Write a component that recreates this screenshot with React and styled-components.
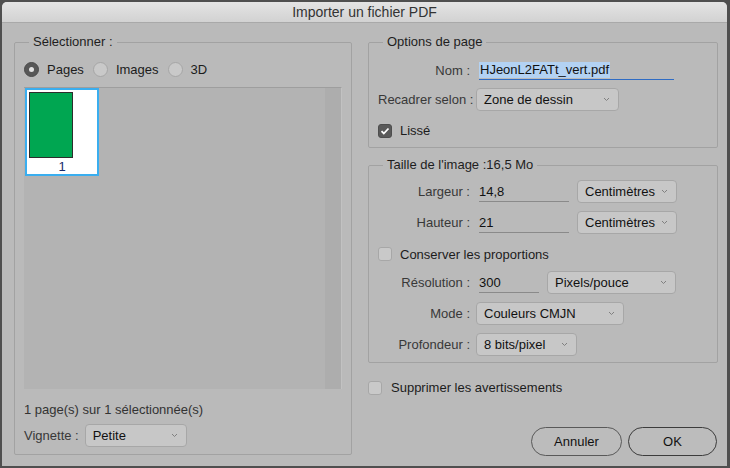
import React from 'react';
import styled, { createGlobalStyle } from 'styled-components';

const GlobalStyle = createGlobalStyle`
  html, body {
    margin: 0;
    padding: 0;
    background: #4f4f4f;
  }
  body {
    font-family: 'Liberation Sans', Arial, sans-serif;
    font-size: 13px;
    color: #1c1c1c;
  }
`;

const Window = styled.div`
  margin: 2px 3px 2px 2px;
  width: 725px;
  height: 464px;
  background: #bababa;
  border-radius: 5px 5px 0 0;
  overflow: hidden;
  display: flex;
  flex-direction: column;
`;

const TitleBar = styled.div`
  height: 20px;
  flex-shrink: 0;
  display: flex;
  align-items: center;
  justify-content: center;
  background: linear-gradient(#e4e4e4, #d2d2d2);
  border-bottom: 1px solid #a9a9a9;
  font-size: 14px;
  color: #333;
`;

const Body = styled.div`
  display: grid;
  grid-template-columns: 338px 350px;
  column-gap: 16px;
  align-items: start;
  padding: 11px 9px 0 12px;
`;

const Column = styled.div`
  display: flex;
  flex-direction: column;
`;

const Group = styled.fieldset`
  margin: ${(p) => p.$mt || 0}px 0 0 0;
  min-width: 0;
  border: 1px solid #a2a2a2;
  border-radius: 2px;
  padding: ${(p) => p.$pt}px 9px ${(p) => p.$pb}px 9px;
  display: flex;
  flex-direction: column;
`;

const Legend = styled.legend`
  margin-left: 5px;
  padding: 0 4px;
  line-height: 16px;
  font-size: 13px;
  color: #1e1e1e;
`;

const RadioRow = styled.div`
  display: flex;
  align-items: center;
  height: 15px;
`;

const Radio = styled.span`
  width: 15px;
  height: 15px;
  box-sizing: border-box;
  border-radius: 50%;
  flex-shrink: 0;
  display: flex;
  align-items: center;
  justify-content: center;
  background: ${(p) => (p.$checked ? '#575757' : '#c9c9c9')};
  border: 1px solid ${(p) => (p.$checked ? '#4a4a4a' : '#a6a6a6')};

  &::after {
    content: '';
    width: 5px;
    height: 5px;
    border-radius: 50%;
    background: #e2e2e2;
    display: ${(p) => (p.$checked ? 'block' : 'none')};
  }
`;

const RadioLabel = styled.span`
  margin: 0 9px 0 8px;
  color: #1c1c1c;
`;

const ThumbArea = styled.div`
  margin-top: 10px;
  height: 301px;
  display: flex;
  background: #b3b3b3;
  border-top: 1px solid #9e9e9e;
  border-right: 1px solid #c2c2c2;
`;

const ThumbList = styled.div`
  flex: 1;
  padding: 0 0 0 1px;
`;

const ScrollTrack = styled.div`
  width: 16px;
  background: #adadad;
`;

const Thumb = styled.div`
  width: 74px;
  height: 88px;
  box-sizing: border-box;
  border: 2px solid #3aaeef;
  background: #fff;
  padding: 2px;
  overflow: hidden;
`;

const ThumbPage = styled.div`
  width: 44px;
  height: 66px;
  box-sizing: border-box;
  background: #00a651;
  border: 1px solid #2d2d2d;
`;

const ThumbNum = styled.div`
  margin-top: 2px;
  line-height: 14px;
  text-align: center;
  color: #17286b;
`;

const Caption = styled.div`
  margin-top: 13px;
  line-height: 16px;
  color: #333;
`;

const FormRow = styled.div`
  display: flex;
  align-items: center;
  margin-top: ${(p) => p.$mt || 0}px;
  height: ${(p) => p.$h || 23}px;
`;

const Label = styled.span`
  width: ${(p) => (p.$w ? `${p.$w}px` : 'auto')};
  flex-shrink: 0;
  text-align: right;
  white-space: nowrap;
  margin-right: 6px;
  color: #383838;
`;

const TextField = styled.div`
  width: ${(p) => p.$w}px;
  height: 20px;
  box-sizing: border-box;
  margin: 0 8px 0 3px;
  border-bottom: 1px solid ${(p) => (p.$focus ? '#2f6cc4' : '#8a8a8a')};
  display: flex;
  align-items: center;
  color: #111;
`;

const Selected = styled.span`
  background: #b3d2f3;
  line-height: 16px;
  padding: 0 1px;
`;

const SelectBox = styled.div`
  width: ${(p) => p.$w}px;
  height: 23px;
  box-sizing: border-box;
  flex-shrink: 0;
  border: 1px solid #a7a7a7;
  border-radius: 4px;
  background: #c7c7c7;
  display: flex;
  align-items: center;
  justify-content: space-between;
  padding: 0 8px 0 7px;
  color: #111;
`;

const Chevron = () => (
  <svg width="7" height="5" viewBox="0 0 7 5">
    <path d="M1 1l2.5 2.5L6 1" fill="none" stroke="#808080" strokeWidth="1" />
  </svg>
);

const Select = ({ w, children }) => (
  <SelectBox $w={w}>
    <span>{children}</span>
    <Chevron />
  </SelectBox>
);

const CheckRow = styled.label`
  display: flex;
  align-items: center;
  height: ${(p) => p.$h || 16}px;
  margin-top: ${(p) => p.$mt || 0}px;
  color: #1c1c1c;
`;

const Box = styled.span`
  width: 14px;
  height: 14px;
  box-sizing: border-box;
  border-radius: 3px;
  flex-shrink: 0;
  margin-right: ${(p) => p.$gap || 8}px;
  display: flex;
  align-items: center;
  justify-content: center;
  background: ${(p) => (p.$checked ? '#5a5a5a' : '#c9c9c9')};
  border: 1px solid ${(p) => (p.$checked ? '#4e4e4e' : '#a7a7a7')};
`;

const Buttons = styled.div`
  display: flex;
  justify-content: flex-end;
  gap: 6px;
  margin-top: 32px;
  padding-right: 1px;
`;

const Button = styled.button`
  width: ${(p) => p.$w}px;
  height: 29px;
  border-radius: 15px;
  background: #bcbcbc;
  border: 1px solid ${(p) => (p.$primary ? '#3c3c3c' : '#595959')};
  font-family: inherit;
  font-size: 13px;
  color: #111;
  padding: 0;
`;

const Check = () => (
  <svg width="10" height="8" viewBox="0 0 10 8">
    <path d="M1.5 4.2l2.3 2.3L8.5 1.5" fill="none" stroke="#fff" strokeWidth="1.8" />
  </svg>
);

export default function App() {
  return (
    <>
      <GlobalStyle />
      <Window>
        <TitleBar>Importer un fichier PDF</TitleBar>
        <Body>
          <Group $pt={12} $pb={7}>
            <Legend>Sélectionner :</Legend>
            <RadioRow>
              <Radio $checked />
              <RadioLabel>Pages</RadioLabel>
              <Radio />
              <RadioLabel>Images</RadioLabel>
              <Radio />
              <RadioLabel>3D</RadioLabel>
            </RadioRow>
            <ThumbArea>
              <ThumbList>
                <Thumb>
                  <ThumbPage />
                  <ThumbNum>1</ThumbNum>
                </Thumb>
              </ThumbList>
              <ScrollTrack />
            </ThumbArea>
            <Caption>1 page(s) sur 1 sélectionnée(s)</Caption>
            <FormRow $mt={6}>
              <Label>Vignette :</Label>
              <Select w={102}>Petite</Select>
            </FormRow>
          </Group>

          <Column>
            <Group $pt={10} $pb={9}>
              <Legend>Options de page</Legend>
              <FormRow $h={20}>
                <Label $w={92}>Nom :</Label>
                <TextField $w={195} $focus>
                  <Selected>HJeonL2FATt_vert.pdf</Selected>
                </TextField>
              </FormRow>
              <FormRow $mt={8}>
                <Label $w={92}>Recadrer selon :</Label>
                <Select w={143}>Zone de dessin</Select>
              </FormRow>
              <CheckRow $mt={12} $h={15}>
                <Box $checked>
                  <Check />
                </Box>
                Lissé
              </CheckRow>
            </Group>

            <Group $mt={9} $pt={7} $pb={6}>
              <Legend>Taille de l'image :16,5 Mo</Legend>
              <FormRow>
                <Label $w={92}>Largeur :</Label>
                <TextField $w={90}>14,8</TextField>
                <Select w={100}>Centimètres</Select>
              </FormRow>
              <FormRow $mt={8}>
                <Label $w={92}>Hauteur :</Label>
                <TextField $w={90}>21</TextField>
                <Select w={100}>Centimètres</Select>
              </FormRow>
              <CheckRow $mt={12}>
                <Box />
                Conserver les proportions
              </CheckRow>
              <FormRow $mt={9}>
                <Label $w={92}>Résolution :</Label>
                <TextField $w={60}>300</TextField>
                <Select w={129}>Pixels/pouce</Select>
              </FormRow>
              <FormRow $mt={8}>
                <Label $w={92}>Mode :</Label>
                <Select w={148}>Couleurs CMJN</Select>
              </FormRow>
              <FormRow $mt={8}>
                <Label $w={92}>Profondeur :</Label>
                <Select w={101}>8 bits/pixel</Select>
              </FormRow>
            </Group>

            <CheckRow $mt={17} $h={15}>
              <Box $gap={9} />
              Supprimer les avertissements
            </CheckRow>

            <Buttons>
              <Button $w={91}>Annuler</Button>
              <Button $w={89} $primary>
                OK
              </Button>
            </Buttons>
          </Column>
        </Body>
      </Window>
    </>
  );
}
